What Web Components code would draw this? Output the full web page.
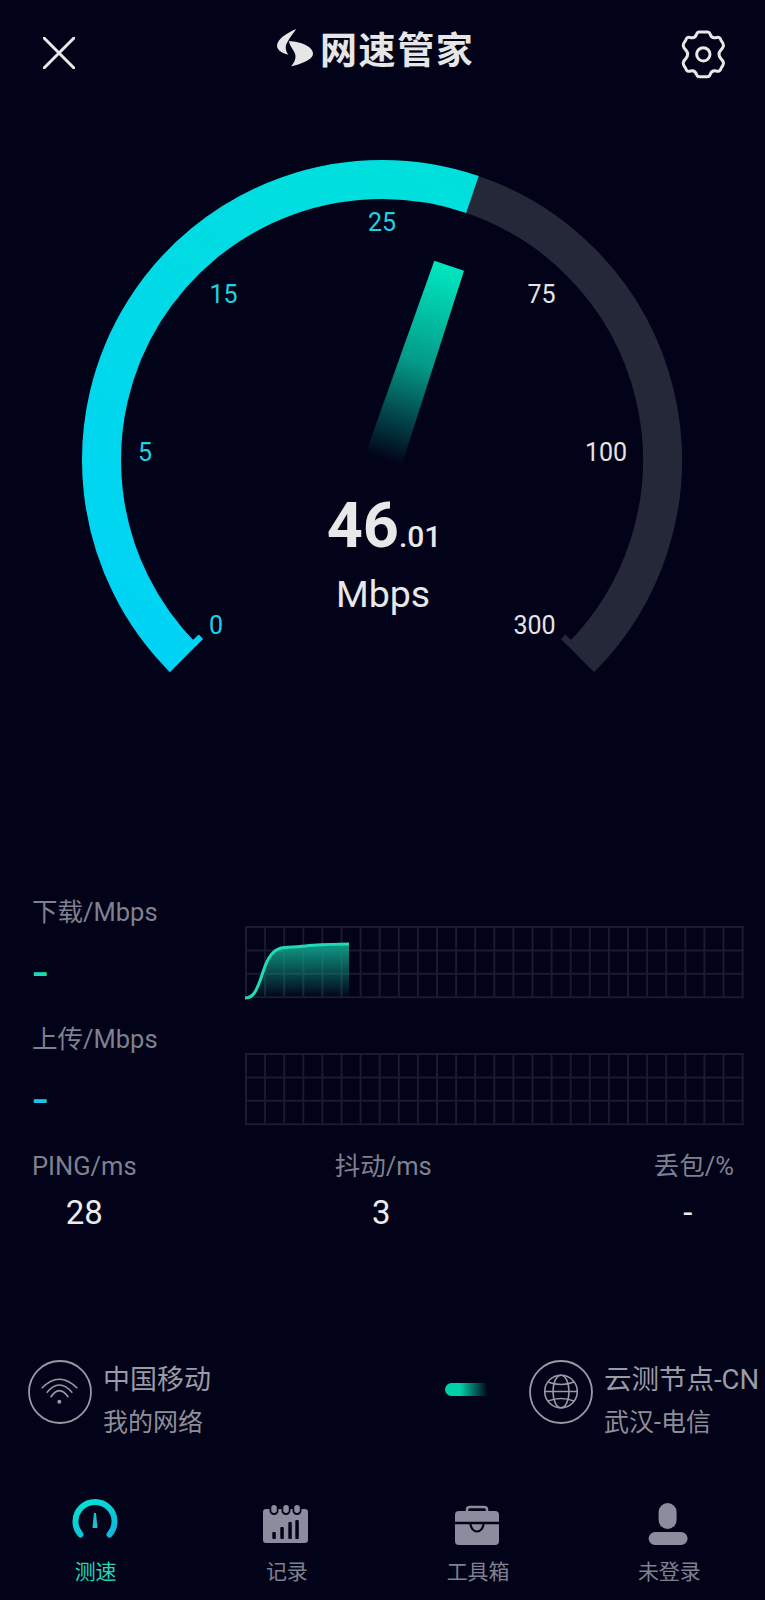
<!DOCTYPE html>
<html lang="zh">
<head>
<meta charset="utf-8">
<title>网速管家</title>
<style>
  html, body { margin: 0; background: #020218; }
  body { width: 765px; height: 1600px; overflow: hidden; font-family: Roboto, "Noto Sans CJK SC", sans-serif; }
</style>
</head>
<body>
<speed-app>
  <top-bar></top-bar>
  <speed-gauge>
    <speed-readout value="46" decimals=".01" unit="Mbps"></speed-readout>
  </speed-gauge>
  <meter-row label="下载/Mbps" color="#1fd8b8" curve></meter-row>
  <meter-row label="上传/Mbps" color="#1cc4ea"></meter-row>
  <stat-row>
    <stat-item label="PING/ms" value="28"></stat-item>
    <stat-item label="抖动/ms" value="3" shift="-2"></stat-item>
    <stat-item label="丢包/%" value="-" shift="-6"></stat-item>
  </stat-row>
  <net-row>
    <net-item icon="wifi" size="27" slot="left"><span slot="name">中国移动</span><span slot="sub">我的网络</span></net-item>
    <net-item icon="globe" size="27.500" slot="right"><span slot="name">云测节点-CN</span><span slot="sub">武汉-电信</span></net-item>
  </net-row>
  <tab-bar>
    <tab-item icon="gauge" active>测速</tab-item>
    <tab-item icon="calendar">记录</tab-item>
    <tab-item icon="case">工具箱</tab-item>
    <tab-item icon="user">未登录</tab-item>
  </tab-bar>
</speed-app>

<script>
const BG = '#020218';
const GRAY = '#8b8d9f';

class SpeedApp extends HTMLElement {
  constructor() {
    super();
    this.attachShadow({ mode: 'open' }).innerHTML = `
      <style>
        :host { display: flex; flex-direction: column; width: 765px; height: 1600px; color: #e8e8e8; }
      </style>
      <slot></slot>`;
  }
}

class TopBar extends HTMLElement {
  constructor() {
    super();
    this.attachShadow({ mode: 'open' }).innerHTML = `
      <style>
        :host { display: grid; grid-template-columns: 234px auto 1fr; align-items: center; height: 106px; padding: 0 37px 0 43px; box-sizing: border-box; }
        svg { display: block; }
        .logo { display: flex; align-items: center; gap: 6px; margin-bottom: 11px; }
        .logo b { font: 700 37px/44px "Noto Sans CJK SC", sans-serif; letter-spacing: 1.6px; color: #e6e6e6; }
        .gear { justify-self: end; margin-right: -12px; }
      </style>
      <svg width="32" height="32" viewBox="0 0 32 32"><path d="M1 1L31 31M31 1L1 31" stroke="#e8e8e8" stroke-width="3" stroke-linecap="round"/></svg>
      <div class="logo">
        <svg width="37" height="38" viewBox="0 0 111 114"><g fill="#e6e6e6">
          <path d="M58 0C28 12 0 32 0 50C0 62 14 72 34 77C24 62 24 50 32 38C38 26 50 12 58 0Z"/>
          <path d="M36 36C70 38 108 52 108 74C108 92 70 106 42 112C54 98 58 86 54 74C50 62 38 52 36 36Z"/>
        </g></svg>
        <b>网速管家</b>
      </div>
      <svg class="gear" width="70" height="65" viewBox="0 0 210 195"><path fill="none" stroke="#e8e8e8" stroke-width="9" stroke-linejoin="round" d="M88 33H112Q118 33 120 39Q125 53 138 50Q150 46 153 58Q162 70 160 76Q158 82 152 88Q142 100 152 112Q158 118 160 124Q162 130 153 142Q150 154 138 150Q125 147 120 161Q118 167 112 167H88Q82 167 80 161Q75 147 62 150Q50 154 47 142Q38 130 40 124Q42 118 48 112Q58 100 48 88Q42 82 40 76Q38 70 47 58Q50 46 62 50Q75 53 80 39Q82 33 88 33Z"/><circle cx="100" cy="100" r="20" fill="none" stroke="#e8e8e8" stroke-width="9"/></svg>`;
  }
}

function polar(r, deg) {
  const a = deg * Math.PI / 180;
  return (382 + r * Math.sin(a)).toFixed(2) + ' ' + (460 - r * Math.cos(a)).toFixed(2);
}
function arc(r, from, to) {
  return `M${polar(r, from)}A${r} ${r} 0 ${to - from > 180 ? 1 : 0} 1 ${polar(r, to)}`;
}

class SpeedGauge extends HTMLElement {
  constructor() {
    super();
    const ticks = [
      ['25', 382, 231, 1], ['15', 223.5, 303, 1], ['5', 145, 461, 1], ['0', 216, 634, 1],
      ['75', 541.5, 303, 0], ['100', 606, 461, 0], ['300', 534.5, 634, 0]
    ].map(t => `<text x="${t[1]}" y="${t[2]}" fill="${t[3] ? '#1dd3e2' : '#e4e4e4'}">${t[0]}</text>`).join('');
    this.attachShadow({ mode: 'open' }).innerHTML = `
      <style>
        :host { display: block; position: relative; height: 580px; margin-bottom: 211px; }
        svg { display: block; }
        text { font: 400 25px Roboto, sans-serif; text-anchor: middle; }
        ::slotted(*) { position: absolute; left: 1px; right: 0; top: 385px; }
      </style>
      <svg width="765" height="580" viewBox="0 106 765 580">
        <defs>
          <linearGradient id="fill" gradientUnits="userSpaceOnUse" x1="170" y1="672" x2="479" y2="175">
            <stop offset="0" stop-color="#00d3f6"/><stop offset="1" stop-color="#00e0da"/>
          </linearGradient>
          <linearGradient id="needle" gradientUnits="userSpaceOnUse" x1="449" y1="265" x2="383" y2="460">
            <stop offset="0" stop-color="#00e8c0"/><stop offset=".5" stop-color="#049a88"/><stop offset="1" stop-color="#020218"/>
          </linearGradient>
        </defs>
        <path d="${arc(280.5, 18, 135)}" fill="none" stroke="#252838" stroke-width="39"/>
        <path d="${arc(258, 133.6, 135)}" fill="none" stroke="#252838" stroke-width="10"/>
        <path d="${arc(280.5, -135, 18.8)}" fill="none" stroke="url(#fill)" stroke-width="39"/>
        <path d="${arc(258, -135, -133.6)}" fill="none" stroke="#00d3f6" stroke-width="10"/>
        <polygon points="434.3,260.7 464,270.7 401.7,465 365,455" fill="url(#needle)"/>
        ${ticks}
      </svg>
      <slot></slot>`;
  }
}

class SpeedReadout extends HTMLElement {
  connectedCallback() {
    this.attachShadow({ mode: 'open' }).innerHTML = `
      <style>
        :host { display: flex; flex-direction: column; align-items: center; font-family: Roboto, sans-serif; color: #e8e8e8; }
        .num { font-size: 63px; line-height: 70px; font-weight: 700; margin-left: 2px; }
        .num span { font-size: 30px; font-weight: 500; }
        .unit { font-size: 37.500px; line-height: 44px; }
      </style>
      <div class="num">${this.getAttribute('value')}<span>${this.getAttribute('decimals')}</span></div>
      <div class="unit">${this.getAttribute('unit')}</div>`;
  }
}

class MeterRow extends HTMLElement {
  connectedCallback() {
    let grid = '';
    for (let i = 0; i <= 26; i++) grid += `<path d="M${1 + i * 19.1} 1V72"/>`;
    for (let i = 0; i <= 3; i++) grid += `<path d="M0 ${1 + i * 23.4}H499"/>`;
    const line = 'M0 72C8 72 11 66 16 52C20 40 24 25 36 22C42 21 54 21 64 19.500C80 18.500 90 18 104 18';
    const curve = this.hasAttribute('curve') ? `
      <defs><linearGradient id="area" x1="0" y1="0" x2="0" y2="1">
        <stop offset="0" stop-color="#0f9a86"/><stop offset="1" stop-color="#0f9a86" stop-opacity="0"/>
      </linearGradient></defs>
      <path d="${line}V72Z" fill="url(#area)"/>
      <path d="${line}" fill="none" stroke="#1fdcb6" stroke-width="3"/>` : '';
    this.attachShadow({ mode: 'open' }).innerHTML = `
      <style>
        :host { display: flex; height: 127px; padding: 0 0 0 32px; box-sizing: border-box; }
        .text { width: 213px; flex: none; }
        .label { font-size: 25.500px; line-height: 30px; color: #7f8090; }
        .dash { font: 500 38px/44px Roboto, sans-serif; color: ${this.getAttribute('color')}; margin-top: 24px; transform: scaleX(1.3); transform-origin: 0 0; }
        svg { display: block; margin-top: 29px; overflow: visible; }
        .grid path { stroke: #1a1b2b; stroke-width: 2; fill: none; }
      </style>
      <div class="text">
        <div class="label">${this.getAttribute('label')}</div>
        <div class="dash">-</div>
      </div>
      <svg width="499" height="73" viewBox="0 0 499 73"><g class="grid">${grid}</g>${curve}</svg>`;
  }
}

class StatRow extends HTMLElement {
  constructor() {
    super();
    this.attachShadow({ mode: 'open' }).innerHTML = `
      <style>
        :host { display: flex; height: 95px; padding: 0 31px 0 32px; }
        ::slotted(:nth-child(2)) { margin-left: 198px; }
        ::slotted(:last-child) { margin-left: auto; }
      </style>
      <slot></slot>`;
  }
}

class StatItem extends HTMLElement {
  connectedCallback() {
    const shift = this.getAttribute('shift') || 0;
    this.attachShadow({ mode: 'open' }).innerHTML = `
      <style>
        :host { display: flex; flex-direction: column; align-items: center; }
        .label { font-size: 25.500px; line-height: 30px; color: #7f8090; }
        .value { font-size: 33px; line-height: 40px; color: #ececec; margin-top: 12px; transform: translateX(${shift}px); }
      </style>
      <div class="label">${this.getAttribute('label')}</div>
      <div class="value">${this.getAttribute('value')}</div>`;
  }
}

class NetRow extends HTMLElement {
  constructor() {
    super();
    this.attachShadow({ mode: 'open' }).innerHTML = `
      <style>
        :host { display: flex; align-items: flex-start; height: 80px; margin-top: 114px; padding-left: 28px; }
        .left { width: 417px; flex: none; }
        .pill { width: 43px; height: 13px; margin: 23px 41px 0 0; flex: none; border-radius: 7px 0 0 7px; background: linear-gradient(90deg, #00cfa8 0, #00cfa8 35%, #020218 100%); }
      </style>
      <div class="left"><slot name="left"></slot></div>
      <div class="pill"></div>
      <slot name="right"></slot>`;
  }
}

const NET_ICONS = {
  wifi: `<path d="M13.700 28.300Q31.300 10.300 49.300 28.300M18.700 32.700Q31.300 17.300 44.300 32.700M22.700 37.300Q31.300 24 40.300 37.300"/><circle cx="31.300" cy="41.700" r="2" fill="#9a9aa5" stroke="none"/>`,
  globe: `<circle cx="32" cy="31.500" r="16.300"/><ellipse cx="32" cy="31.500" rx="8" ry="16.300"/><path d="M15.700 31.500H48.300M19 22Q32 27 45 22M19 41Q32 36 45 41"/>`
};

class NetItem extends HTMLElement {
  connectedCallback() {
    this.attachShadow({ mode: 'open' }).innerHTML = `
      <style>
        :host { display: flex; align-items: flex-start; gap: 11px; white-space: nowrap; }
        svg { display: block; flex: none; }
        svg * { fill: none; stroke: #9a9aa5; stroke-width: 1.600; }
        svg circle[stroke="none"] { fill: #9a9aa5; stroke: none; }
        .lines { display: flex; flex-direction: column; padding-top: 2px; }
        .name { font-size: ${this.getAttribute('size')}px; line-height: 36px; color: #9b9ba6; }
        .sub { font-size: 25px; line-height: 36px; color: #8e8e99; margin-top: 7px; }
      </style>
      <svg width="64" height="64" viewBox="0 0 64 64"><circle cx="32" cy="32" r="31" style="stroke-width:1.800"/>${NET_ICONS[this.getAttribute('icon')]}</svg>
      <div class="lines">
        <div class="name"><slot name="name"></slot></div>
        <div class="sub"><slot name="sub"></slot></div>
      </div>`;
  }
}

class TabBar extends HTMLElement {
  constructor() {
    super();
    this.attachShadow({ mode: 'open' }).innerHTML = `
      <style>
        :host { display: grid; grid-template-columns: repeat(4, 1fr); margin-top: 57px; }
      </style>
      <slot></slot>`;
  }
}

const TAB_ICONS = {
  gauge: `<defs><linearGradient id="g" x1="0" y1="0" x2=".7" y2="1"><stop offset="0" stop-color="#00e6d6"/><stop offset="1" stop-color="#14b8d8"/></linearGradient></defs>
    <path d="M14.500 37.500A19.500 19.500 0 1 1 43.500 37.500" fill="none" stroke="url(#g)" stroke-width="6" stroke-linecap="round"/>
    <polygon points="28,16 30,16 31.500,31 26.500,31" fill="#12c6cc"/>`,
  calendar: `<rect x="6" y="12" width="45" height="34" rx="3" fill="${GRAY}"/>
    <g fill="${BG}"><rect x="12.500" y="6" width="9" height="12" rx="4.500"/><rect x="24.500" y="6" width="9" height="12" rx="4.500"/><rect x="35.500" y="6" width="9" height="12" rx="4.500"/></g>
    <g fill="${GRAY}"><rect x="14.300" y="8" width="5.500" height="8" rx="2.700"/><rect x="26.300" y="8" width="5.500" height="8" rx="2.700"/><rect x="37.300" y="8" width="5.500" height="8" rx="2.700"/></g>
    <g fill="${BG}"><rect x="15.300" y="35" width="3.500" height="7" rx="1"/><rect x="23.300" y="30" width="3.500" height="12" rx="1"/><rect x="31.300" y="25" width="3.500" height="17" rx="1"/><rect x="38.300" y="23" width="3.500" height="19" rx="1"/></g>`,
  case: `<path d="M19 14V12.500Q19 10 22 10H36Q39 10 39 12.500V14" fill="none" stroke="${GRAY}" stroke-width="2.500"/>
    <rect x="7" y="14" width="44" height="34" rx="4" fill="${GRAY}"/>
    <path d="M7 26H51" stroke="${BG}" stroke-width="2.500"/>
    <path d="M22.500 26.500A6.500 8 0 0 0 35.500 26.500" fill="none" stroke="${BG}" stroke-width="2.200"/>`,
  user: `<rect x="19.600" y="6" width="18" height="26" rx="9" fill="${GRAY}"/><rect x="9.600" y="35" width="39" height="13" rx="6.500" fill="${GRAY}"/>`
};

class TabItem extends HTMLElement {
  connectedCallback() {
    const active = this.hasAttribute('active');
    this.attachShadow({ mode: 'open' }).innerHTML = `
      <style>
        :host { display: flex; flex-direction: column; align-items: center; }
        svg { display: block; }
        .label { font-size: 21px; line-height: 30px; margin-top: 10px; color: ${active ? '#1fd8b8' : '#7f8090'}; }
      </style>
      <svg width="60" height="50" viewBox="0 0 60 50">${TAB_ICONS[this.getAttribute('icon')]}</svg>
      <div class="label"><slot></slot></div>`;
  }
}

customElements.define('speed-app', SpeedApp);
customElements.define('top-bar', TopBar);
customElements.define('speed-gauge', SpeedGauge);
customElements.define('speed-readout', SpeedReadout);
customElements.define('meter-row', MeterRow);
customElements.define('stat-row', StatRow);
customElements.define('stat-item', StatItem);
customElements.define('net-row', NetRow);
customElements.define('net-item', NetItem);
customElements.define('tab-bar', TabBar);
customElements.define('tab-item', TabItem);
</script>
</body>
</html>
